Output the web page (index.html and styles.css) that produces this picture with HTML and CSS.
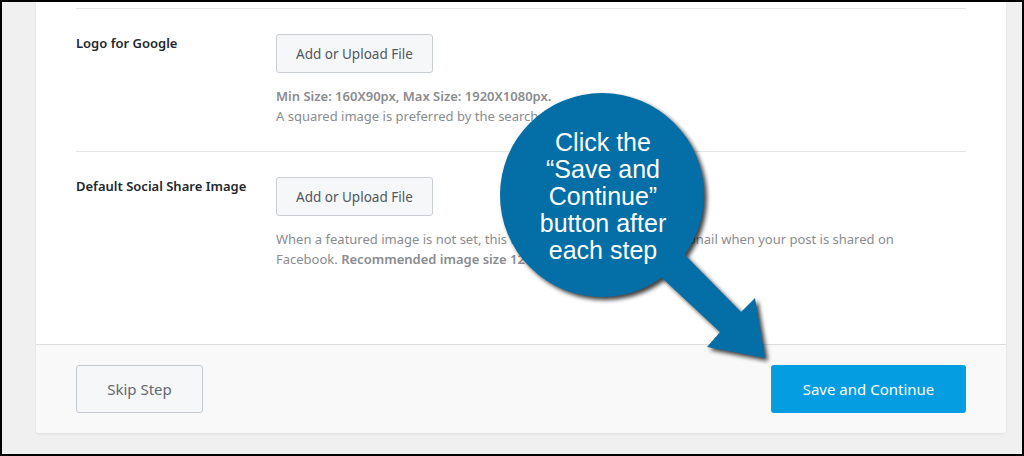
FILE: index.html
```html
<!DOCTYPE html>
<html lang="en">
<head>
    <meta charset="UTF-8">
    <title>Search Appearance - Setup Wizard</title>
    <link rel="stylesheet" href="styles.css">
</head>
<body>
    <div class="screen">
        <div class="card">

            <div class="fields">
                <div class="row">
                    <div class="label">Logo for Google</div>
                    <div class="field">
                        <button class="btn-upload">Add or Upload File</button>
                        <p class="help">
                            <strong>Min Size: 160X90px, Max Size: 1920X1080px.</strong><br>
                            A squared image is preferred by the search engines.
                        </p>
                    </div>
                </div>

                <div class="row">
                    <div class="label">Default Social Share Image</div>
                    <div class="field">
                        <button class="btn-upload">Add or Upload File</button>
                        <p class="help">
                            When a featured image is not set, this image will be used as a thumbnail when your post is shared on
                            Facebook. <strong>Recommended image size 1200 x 630 pixels.</strong>
                        </p>
                    </div>
                </div>
            </div>

            <div class="footer">
                <button class="btn-skip">Skip Step</button>
                <button class="btn-save">Save and Continue</button>
            </div>

        </div>

        <div class="callout">
            <svg class="callout-shape" width="300" height="300" viewBox="480 80 300 300">
                <g fill="#046ea6">
                    <circle cx="602" cy="195" r="102"/>
                    <path d="M682 252 L741 312 L755 298 L765 358 L707 347 L720 332 L660 276 Z"/>
                </g>
            </svg>
            <div class="callout-text">Click the<br>“Save and<br>Continue”<br>button after<br>each step</div>
        </div>
    </div>
</body>
</html>
```

FILE: styles.css
```css
* {
    box-sizing: border-box;
}

html, body {
    margin: 0;
    height: 100%;
}

body {
    background: #000;
    padding: 2px;
    font-family: "Noto Sans", "Open Sans", sans-serif;
    overflow: hidden;
}

.screen {
    position: relative;
    height: 100%;
    background: #f0f0f1;
    padding: 0 16px 0 34px;
}

.card {
    background: #fff;
    border-radius: 0 0 4px 4px;
    box-shadow: 0 1px 3px rgba(0, 0, 0, 0.08);
    padding-top: 6px;
    overflow: hidden;
}

.fields {
    padding: 0 40px;
}

.row {
    display: flex;
    border-top: 1px solid #e2e4e7;
    padding-top: 25px;
    height: 143px;
}

.row + .row {
    height: 193px;
}

.label {
    width: 200px;
    flex-shrink: 0;
    font-size: 13px;
    font-weight: 600;
    color: #23282d;
}

.field {
    flex: 1;
    max-width: 650px;
}

button {
    font-family: inherit;
    cursor: pointer;
}

.btn-upload {
    height: 39px;
    padding: 0 19px;
    font-size: 13.5px;
    color: #50575e;
    background: #f6f7f9;
    border: 1px solid #c8ced4;
    border-radius: 3px;
}

.help {
    margin: 13px 0 0;
    font-size: 13px;
    line-height: 20px;
    color: #8a8c8f;
}

.help strong {
    font-weight: 600;
}

.footer {
    display: flex;
    justify-content: space-between;
    background: #f9f9f9;
    border-top: 1px solid #dcdde0;
    padding: 20px 40px;
}

.btn-skip,
.btn-save {
    height: 48px;
    font-size: 15px;
    border-radius: 3px;
}

.btn-skip {
    width: 127px;
    color: #646970;
    background: #f6f7f9;
    border: 1px solid #c3c8ce;
}

.btn-save {
    width: 195px;
    color: #fff;
    background: #059de1;
    border: none;
}

.callout {
    position: absolute;
    left: 478px;
    top: 78px;
    width: 300px;
    height: 300px;
}

.callout-shape {
    display: block;
    filter: drop-shadow(3px 3px 2px rgba(0, 0, 0, 0.75));
}

.callout-text {
    position: absolute;
    left: 21px;
    top: 49px;
    width: 204px;
    text-align: center;
    font-family: "Liberation Sans", Arial, sans-serif;
    font-size: 25px;
    line-height: 27px;
    color: #fff;
}
```
